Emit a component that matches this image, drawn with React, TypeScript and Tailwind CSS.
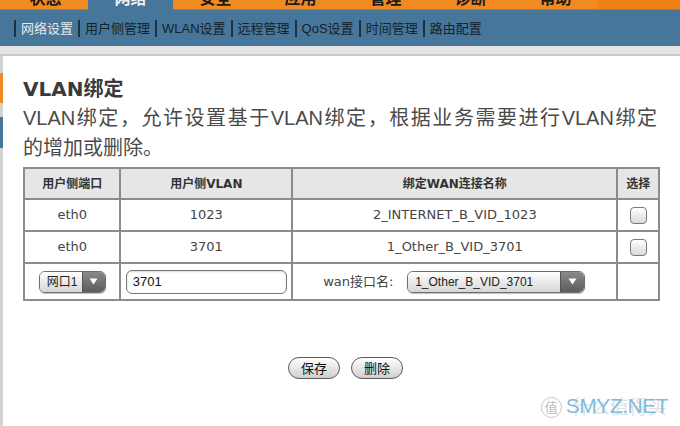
const tabs = ["状态", "网络", "安全", "应用", "管理", "诊断", "帮助"];
const subnav = ["网络设置", "用户侧管理", "WLAN设置", "远程管理", "QoS设置", "时间管理", "路由配置"];

const rows = [
  { port: "eth0", vlan: "1023", wan: "2_INTERNET_B_VID_1023" },
  { port: "eth0", vlan: "3701", wan: "1_Other_B_VID_3701" },
];

const cjk = "font-['Liberation_Sans','Noto_Sans_CJK_SC',sans-serif]";
const verd = "font-['DejaVu_Sans','Noto_Sans_CJK_SC',sans-serif]";

function Arrow() {
  return (
    <svg width="9" height="7" viewBox="0 0 9 7">
      <polygon points="0.5,0.5 8.5,0.5 4.5,6.5" fill="#fff" />
    </svg>
  );
}

function Select({ value, width, arrowW = 23 }: { value: string; width: number; arrowW?: number }) {
  return (
    <div
      className="flex h-[22px] overflow-hidden rounded-[6px] border border-[#6f6f6f] shadow-[0_1px_1px_rgba(0,0,0,0.25)]"
      style={{ width }}
    >
      <div className="flex flex-1 items-center bg-gradient-to-b from-white to-[#d6d6d6] pl-[7px] text-[12px] text-[#222]">
        {value}
      </div>
      <div
        className="flex items-center justify-center border-l border-[#555] bg-gradient-to-b from-[#8a8a8a] to-[#5c5c5c]"
        style={{ width: arrowW }}
      >
        <Arrow />
      </div>
    </div>
  );
}

function Check() {
  return (
    <div className="mx-auto h-[17px] w-[17px] rounded-[4px] border border-[#7a7a7a] bg-gradient-to-b from-white to-[#d9d9d9]" />
  );
}

function Btn({ label }: { label: string }) {
  return (
    <button className="h-[22px] w-[52px] rounded-full border-[1.5px] border-[#5a5a5a] bg-gradient-to-b from-white to-[#cfcfcf] text-[13px] leading-none text-[#111]">
      {label}
    </button>
  );
}

export default function App() {
  return (
    <div className={`relative h-[426px] w-[680px] overflow-hidden bg-white ${cjk}`}>
      {/* top tabs, mostly cut off */}
      <div className="flex h-[10px] bg-[#ef8014]">
        <div className="flex border-b border-[#c86f1c] bg-[#f28a22] pl-[3px]">
          {tabs.map((t, i) => (
            <div
              key={t}
              className={`h-[10px] w-[85px] overflow-hidden text-center ${
                i === 1 ? "border-b-0 bg-[#46769a] text-[#f2f2f2]" : "text-[#1a1a1a]"
              }`}
            >
              <span className="-mt-[10px] block text-[16px] font-bold leading-[18px]">{t}</span>
            </div>
          ))}
        </div>
        <div className="flex-1 border-b border-[#c86f1c]" />
      </div>

      {/* sub navigation */}
      <div className="flex h-[36px] items-center bg-[#46769a] pl-[14px]">
        {subnav.map((s, i) => (
          <div
            key={s}
            className={`border-l-2 border-[#1d3145] px-[5px] text-[13px] leading-[17px] ${
              i === 0 ? "text-[#e3e9ef]" : "text-[#15222d]"
            }`}
          >
            {s}
          </div>
        ))}
      </div>

      <div className="h-[10px] border-b-2 border-[#c9c9c9] bg-[#e3e3e3]" />

      <div className="flex h-[370px]">
        {/* left edge strip */}
        <div className="flex w-[3px] flex-col bg-[#d2d2d2]">
          <div className="h-[17px]" />
          <div className="h-[30px] bg-[#f08a22]" />
          <div className="h-[14px]" />
          <div className="h-[31px] bg-[#46769a]" />
        </div>

        <div className="w-[657px] pl-[20px]">
          <h1 className={`mt-[21px] text-[20px] font-bold leading-[24px] text-[#3a3a3a] ${verd}`}>VLAN绑定</h1>
          <p className="mt-[2px] text-[20px] leading-[30px] text-[#4a4a4a]">
            <span className="block w-[634px] text-justify [text-align-last:justify]">
              VLAN绑定，允许设置基于VLAN绑定，根据业务需要进行VLAN绑定
            </span>
            <span className="block">的增加或删除。</span>
          </p>

          <table className={`mt-[4px] w-[637px] border-collapse border-2 border-[#8c8c8c] text-center text-[13px] text-[#444] ${verd}`}>
            <colgroup>
              <col className="w-[97px]" />
              <col className="w-[172px]" />
              <col className="w-[326px]" />
              <col className="w-[42px]" />
            </colgroup>
            <thead>
              <tr className="h-[31px] bg-[#e6e6e6] text-[#333]">
                <th className="border-2 border-[#8c8c8c] text-[12px] font-bold">用户侧端口</th>
                <th className="border-2 border-[#8c8c8c] text-[12px] font-bold">用户侧VLAN</th>
                <th className="border-2 border-[#8c8c8c] text-[12px] font-bold">绑定WAN连接名称</th>
                <th className="border-2 border-[#8c8c8c] text-[12px] font-bold">选择</th>
              </tr>
            </thead>
            <tbody>
              {rows.map((r, i) => (
                <tr key={i} className="h-[32px]">
                  <td className="border-2 border-[#8c8c8c]">{r.port}</td>
                  <td className="border-2 border-[#8c8c8c]">{r.vlan}</td>
                  <td className="border-2 border-[#8c8c8c]">{r.wan}</td>
                  <td className="border-2 border-[#8c8c8c]">
                    <Check />
                  </td>
                </tr>
              ))}
              <tr className="h-[37px]">
                <td className="border-2 border-[#8c8c8c]">
                  <div className={`flex justify-center ${cjk}`}>
                    <Select value="网口1" width={67} />
                  </div>
                </td>
                <td className="border-2 border-[#8c8c8c]">
                  <div className="flex justify-center">
                    <div className={`flex h-[24px] w-[161px] items-center rounded-[6px] border-[1.5px] border-[#777] bg-white pl-[6px] text-[13px] text-[#111] shadow-[inset_0_1px_2px_rgba(0,0,0,0.15)] ${cjk}`}>
                      3701
                    </div>
                  </div>
                </td>
                <td className="border-2 border-[#8c8c8c]">
                  <div className="flex items-center pl-[30px]">
                    <span className="w-[84px] text-left text-[13px] text-[#444]">wan接口名:</span>
                    <div className={cjk}>
                      <Select value="1_Other_B_VID_3701" width={178} arrowW={24} />
                    </div>
                  </div>
                </td>
                <td className="border-2 border-[#8c8c8c]" />
              </tr>
            </tbody>
          </table>

          <div className="mt-[56px] flex w-[637px] justify-center gap-[11px] pl-[8px]">
            <Btn label="保存" />
            <Btn label="删除" />
          </div>
        </div>
      </div>

      {/* watermark */}
      <div className="absolute bottom-[6px] right-[12px] flex items-center">
        <div className="flex h-[21px] w-[21px] items-center justify-center rounded-full border-[1.5px] border-[#c4c4c4] text-[13px] leading-none text-[#bdbdbd]">
          值
        </div>
        <div className="relative ml-[4px]">
          <span className="absolute left-[6px] top-[3px] text-[19px] leading-none text-[#e2e2e2]">什么值得买</span>
          <span className="relative text-[21px] leading-none tracking-[-0.5px] text-[#7fbde0]">SMYZ.NET</span>
        </div>
      </div>
    </div>
  );
}
